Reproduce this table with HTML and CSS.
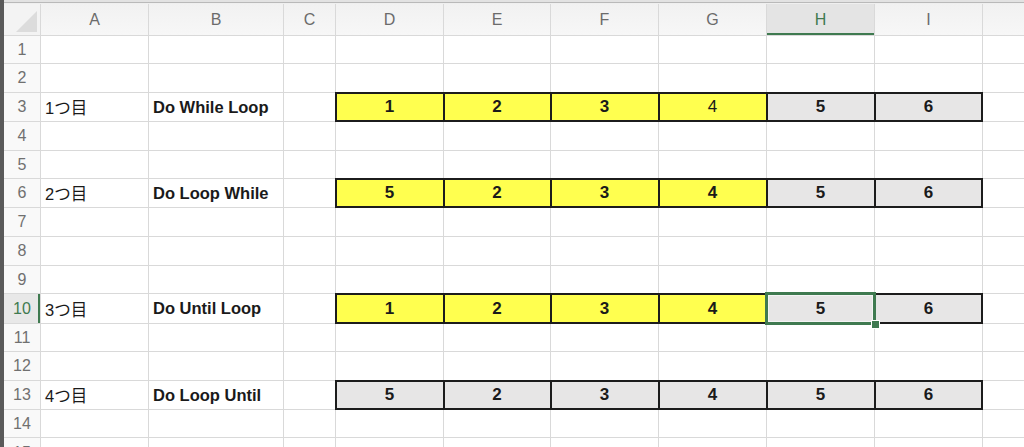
FILE: index.html
```html
<!DOCTYPE html>
<html lang="ja">
<head>
<meta charset="utf-8">
<title>Sheet</title>
<link rel="stylesheet" href="styles.css">
</head>
<body>
<div class="window">
  <div class="topbar"></div>
  <div class="sheet">
    <!-- header row -->
    <div class="corner"><svg width="21" height="21" viewBox="0 0 21 21"><polygon points="21,0 21,21 0,21" fill="#dcdcdc"/></svg></div>
    <div class="ch">A</div><div class="ch">B</div><div class="ch">C</div><div class="ch">D</div><div class="ch">E</div><div class="ch">F</div><div class="ch">G</div><div class="ch ch-active">H</div><div class="ch">I</div><div class="ch"></div>

    <div class="rh">1</div><div class="c"></div><div class="c"></div><div class="c"></div><div class="c"></div><div class="c"></div><div class="c"></div><div class="c"></div><div class="c"></div><div class="c"></div><div class="c"></div>
    <div class="rh">2</div><div class="c"></div><div class="c"></div><div class="c"></div><div class="c"></div><div class="c"></div><div class="c"></div><div class="c"></div><div class="c"></div><div class="c"></div><div class="c"></div>

    <div class="rh">3</div><div class="c txt">1つ目</div><div class="c txt b">Do While Loop</div><div class="c"></div>
    <div class="c num y bx">1</div><div class="c num y bx">2</div><div class="c num y bx">3</div><div class="c num y bx reg">4</div><div class="c num g bx">5</div><div class="c num g bx last">6</div><div class="c"></div>

    <div class="rh">4</div><div class="c"></div><div class="c"></div><div class="c"></div><div class="c"></div><div class="c"></div><div class="c"></div><div class="c"></div><div class="c"></div><div class="c"></div><div class="c"></div>
    <div class="rh">5</div><div class="c"></div><div class="c"></div><div class="c"></div><div class="c"></div><div class="c"></div><div class="c"></div><div class="c"></div><div class="c"></div><div class="c"></div><div class="c"></div>

    <div class="rh">6</div><div class="c txt">2つ目</div><div class="c txt b">Do Loop While</div><div class="c"></div>
    <div class="c num y bx">5</div><div class="c num y bx">2</div><div class="c num y bx">3</div><div class="c num y bx">4</div><div class="c num g bx">5</div><div class="c num g bx last">6</div><div class="c"></div>

    <div class="rh">7</div><div class="c"></div><div class="c"></div><div class="c"></div><div class="c"></div><div class="c"></div><div class="c"></div><div class="c"></div><div class="c"></div><div class="c"></div><div class="c"></div>
    <div class="rh">8</div><div class="c"></div><div class="c"></div><div class="c"></div><div class="c"></div><div class="c"></div><div class="c"></div><div class="c"></div><div class="c"></div><div class="c"></div><div class="c"></div>
    <div class="rh">9</div><div class="c"></div><div class="c"></div><div class="c"></div><div class="c"></div><div class="c"></div><div class="c"></div><div class="c"></div><div class="c"></div><div class="c"></div><div class="c"></div>

    <div class="rh rh-active">10</div><div class="c txt">3つ目</div><div class="c txt b">Do Until Loop</div><div class="c"></div>
    <div class="c num y bx">1</div><div class="c num y bx">2</div><div class="c num y bx">3</div><div class="c num y bx">4</div><div class="c num g bx selected">5</div><div class="c num g bx last">6</div><div class="c"></div>

    <div class="rh">11</div><div class="c"></div><div class="c"></div><div class="c"></div><div class="c"></div><div class="c"></div><div class="c"></div><div class="c"></div><div class="c"></div><div class="c"></div><div class="c"></div>
    <div class="rh">12</div><div class="c"></div><div class="c"></div><div class="c"></div><div class="c"></div><div class="c"></div><div class="c"></div><div class="c"></div><div class="c"></div><div class="c"></div><div class="c"></div>

    <div class="rh">13</div><div class="c txt">4つ目</div><div class="c txt b">Do Loop Until</div><div class="c"></div>
    <div class="c num g bx">5</div><div class="c num g bx">2</div><div class="c num g bx">3</div><div class="c num g bx">4</div><div class="c num g bx">5</div><div class="c num g bx last">6</div><div class="c"></div>

    <div class="rh">14</div><div class="c"></div><div class="c"></div><div class="c"></div><div class="c"></div><div class="c"></div><div class="c"></div><div class="c"></div><div class="c"></div><div class="c"></div><div class="c"></div>
    <div class="rh rh-last">15</div><div class="c"></div><div class="c"></div><div class="c"></div><div class="c"></div><div class="c"></div><div class="c"></div><div class="c"></div><div class="c"></div><div class="c"></div><div class="c"></div>
  </div>
</div>
</body>
</html>
```

FILE: styles.css
```css
html, body {
  margin: 0;
  padding: 0;
  width: 1024px;
  height: 447px;
  overflow: hidden;
  background: #ffffff;
}

.window {
  height: 447px;
  border-left: 4px solid #5a5a5a;
  box-sizing: border-box;
  display: flex;
  flex-direction: column;
  overflow: hidden;
}

.topbar {
  height: 4px;
  flex: none;
  background: linear-gradient(#e2e2e2 0, #e2e2e2 2px, #b9b9b9 2px, #b9b9b9 3px, #efefef 3px);
}

.sheet {
  display: grid;
  grid-template-columns: 36px 107px 134px 51px 107px 106px 107px 107px 107px 107px 1fr;
  grid-template-rows: 31px 27px 28px 28px 28px 27px 28px 28px 28px 27px 29px 27px 28px 28px 27px 28px;
  gap: 1px;
  background: #d9d9d9;
  font-family: "Liberation Sans", "Noto Sans CJK JP", sans-serif;
}

.corner {
  background: #f3f3f3;
  display: flex;
  align-items: flex-end;
  justify-content: flex-end;
  padding: 0 3px 3px 0;
}

.ch {
  background: linear-gradient(#f1f1f1, #f7f7f7);
  color: #6b6b6b;
  font-size: 16px;
  display: flex;
  align-items: center;
  justify-content: center;
}

.ch-active {
  background: #e4e4e4;
  color: #3f7a50;
  box-shadow: inset 0 -2px 0 #3f7a50;
}

.rh {
  background: #f9f9f9;
  color: #707070;
  font-size: 16px;
  display: flex;
  align-items: center;
  justify-content: center;
}

.rh-last {
  align-items: flex-start;
  padding-top: 6px;
}

.rh-active {
  background: #e8e8e8;
  color: #3f7a50;
  box-shadow: inset -2px 0 0 #3f7a50;
}

.c {
  background: #ffffff;
  display: flex;
  align-items: center;
  min-width: 0;
  color: #1a1a1a;
  font-size: 16.5px;
  white-space: nowrap;
}

.txt {
  padding-left: 4px;
}

.b {
  font-weight: bold;
}

.num {
  justify-content: center;
  font-weight: bold;
  font-size: 17px;
}

.num.reg {
  font-weight: normal;
}

.y {
  background: #ffff4f;
}

.g {
  background: #e7e6e6;
}

.bx {
  box-shadow: 0 0 0 1px #1c1c1c, inset 1px 1px 0 #1c1c1c, inset 0 -1px 0 #1c1c1c;
}

.bx.last {
  box-shadow: 0 0 0 1px #1c1c1c, inset 1px 1px 0 #1c1c1c, inset -1px -1px 0 #1c1c1c;
}

.selected {
  position: relative;
  z-index: 2;
}

.selected::after {
  content: "";
  position: absolute;
  left: -2px;
  top: -2px;
  right: -2px;
  bottom: -2px;
  border: 3px solid #3f7a50;
  box-shadow: inset 0 0 0 1px #f4f4f4;
}

.selected::before {
  content: "";
  position: absolute;
  right: -5px;
  bottom: -5px;
  width: 7px;
  height: 7px;
  background: #3f7a50;
  box-shadow: 0 0 0 1px #ffffff;
  z-index: 1;
}
```
